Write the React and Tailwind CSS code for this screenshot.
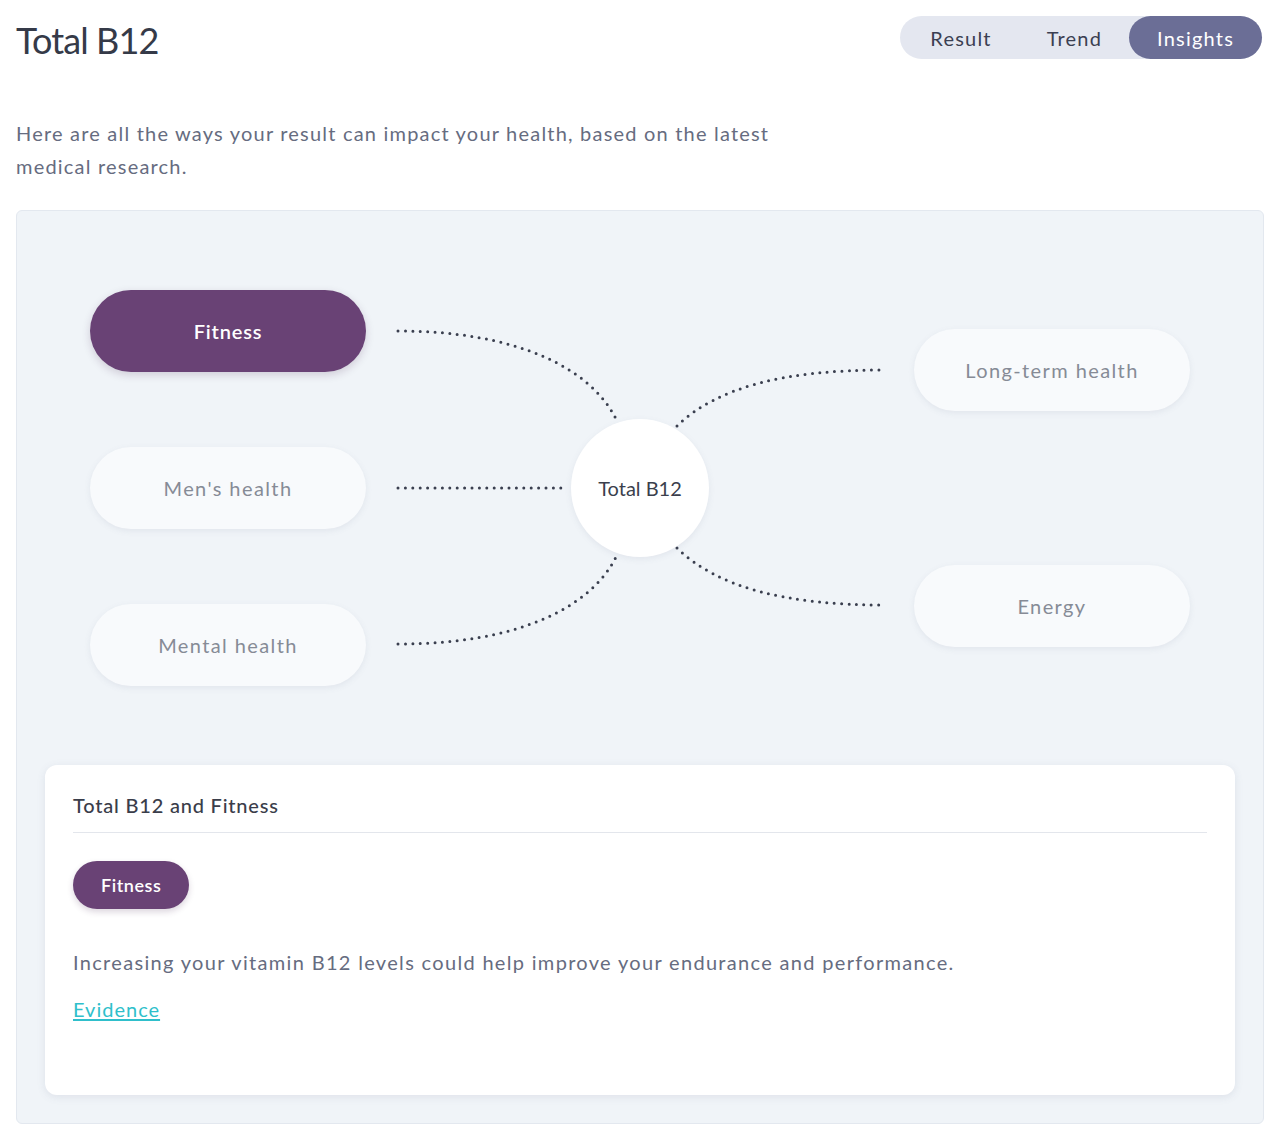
import React from "react";

const font = { fontFamily: "Lato, 'Noto Sans', sans-serif" };

// diagram nodes, positions are on the diagram canvas
const nodes = [
  { label: "Fitness", pos: "left-[45px] top-[51px]", active: true },
  { label: "Men's health", pos: "left-[45px] top-[208px]" },
  { label: "Mental health", pos: "left-[45px] top-[365px]" },
  { label: "Long-term health", pos: "left-[869px] top-[90px]" },
  { label: "Energy", pos: "left-[869px] top-[326px]" },
];

const links = [
  "M353,92 C470,92 545,128 571,180",
  "M353,249 L523,249",
  "M353,405 C470,405 545,370 571,318",
  "M632,187 C672,148 740,131 839,131",
  "M632,309 C672,348 740,366 839,366",
];

const Tabs = () => (
  <div className="flex items-center bg-[#e4e7f0] rounded-full h-[43px] text-[20px] tracking-[0.06em] text-[#3b3f52]">
    <button className="pl-[30px] pr-[28px] h-full">Result</button>
    <button className="px-[27px] h-full">Trend</button>
    <button className="px-[28px] h-full rounded-full bg-[#6b6e96] text-white">Insights</button>
  </div>
);

const Diagram = () => (
  <div className="relative h-[526px]">
    <svg className="absolute inset-0" width="1191" height="526">
      {links.map((d, i) => (
        <path key={i} d={d} fill="none" stroke="#3a3f4f" strokeWidth="3" strokeLinecap="round" strokeDasharray="0 7.4" />
      ))}
    </svg>
    {nodes.map((n) => (
      <div
        key={n.label}
        className={`absolute ${n.pos} w-[276px] h-[82px] rounded-full flex items-center justify-center text-[20px] ${
          n.active
            ? "bg-[#694275] text-white font-semibold tracking-[0.04em] shadow-[0_3px_8px_rgba(60,30,70,0.18)]"
            : "bg-[#f8fafc] text-[#868b96] tracking-[0.07em] shadow-[0_2px_6px_rgba(100,110,140,0.10)]"
        }`}
      >
        {n.label}
      </div>
    ))}
    <div className="absolute left-[526px] top-[180px] w-[138px] h-[138px] rounded-full bg-white flex items-center justify-center text-[20px] text-[#3b3f4d] shadow-[0_2px_6px_rgba(100,110,140,0.10)]">
      Total B12
    </div>
  </div>
);

const DetailCard = () => (
  <div className="bg-white rounded-xl shadow-[0_2px_8px_rgba(90,100,130,0.12)] px-7 pt-[25px] pb-[71px]">
    <h3 className="text-[20px] font-medium tracking-[0.04em] text-[#3a3d4a] pb-[12px] border-b border-[#e3e6ec]">Total B12 and Fitness</h3>
    <span className="inline-flex mt-7 h-[48px] px-[28px] items-center rounded-full bg-[#694275] text-white text-[18px] font-semibold tracking-[0.03em] shadow-[0_3px_6px_rgba(60,30,70,0.18)]">
      Fitness
    </span>
    <p className="mt-[38px] text-[20px] tracking-[0.066em] text-[#666c80]">
      Increasing your vitamin B12 levels could help improve your endurance and performance.
    </p>
    <a href="#" className="inline-block mt-[17px] text-[20px] tracking-[0.05em] text-[#2fbfcb] underline underline-offset-2">
      Evidence
    </a>
  </div>
);

export default function App() {
  return (
    <div style={font} className="bg-white min-h-[1144px] px-4 pt-4 pb-[22px]">
      <div className="flex items-start justify-between">
        <h1 className="text-[36px] leading-[48px] tracking-[-0.025em] text-[#353a48]">Total B12</h1>
        <div className="mr-[2px]"><Tabs /></div>
      </div>
      <p className="mt-[53px] max-w-[790px] text-[20px] leading-[33px] tracking-[0.06em] text-[#666c80]">
        Here are all the ways your result can impact your health, based on the latest medical research.
      </p>
      <div className="mt-[27px] bg-[#f0f4f8] border border-[#e3e8ef] rounded-md p-7">
        <Diagram />
        <DetailCard />
      </div>
    </div>
  );
}
